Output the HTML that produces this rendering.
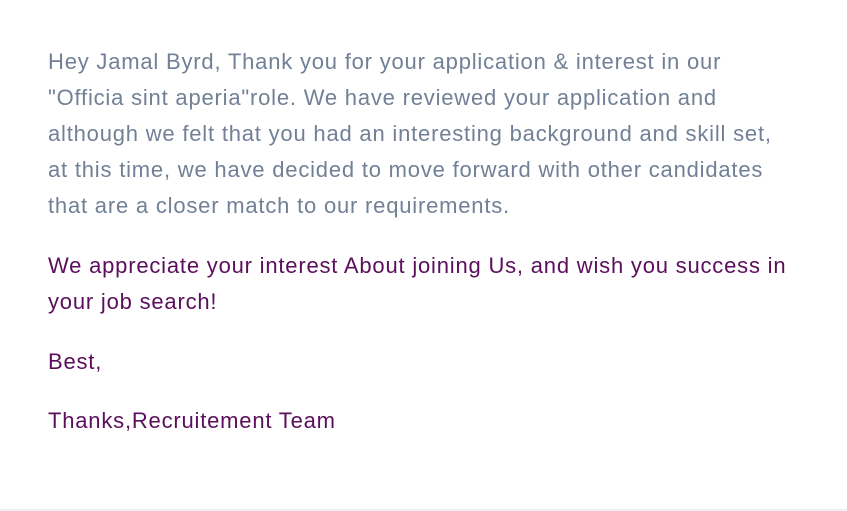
<!DOCTYPE html>
<html><head><style>
body{margin:0;background:#fff;width:847px;height:511px;overflow:hidden;position:relative;font-family:"Liberation Sans",sans-serif;font-size:22px;}
p{position:absolute;left:48px;margin:0;line-height:36px;white-space:nowrap;letter-spacing:0.8px}
.g{color:#718096}
.m{color:#5b0e5b}
.bl{position:absolute;left:0;right:0;bottom:0;height:2px;background:#edf0f3}
</style></head><body>
<p class="g" style="top:44px">Hey Jamal Byrd, Thank you for your application &amp; interest in our<br>"Officia sint aperia"role. We have reviewed your application and<br>although we felt that you had an interesting background and skill set,<br>at this time, we have decided to move forward with other candidates<br>that are a closer match to our requirements.</p>
<p class="m" style="top:248px">We appreciate your interest About joining Us, and wish you success in<br>your job search!</p>
<p class="m" style="top:344px">Best,</p>
<p class="m" style="top:403px">Thanks,Recruitement Team</p>
<div class="bl"></div>
</body></html>
